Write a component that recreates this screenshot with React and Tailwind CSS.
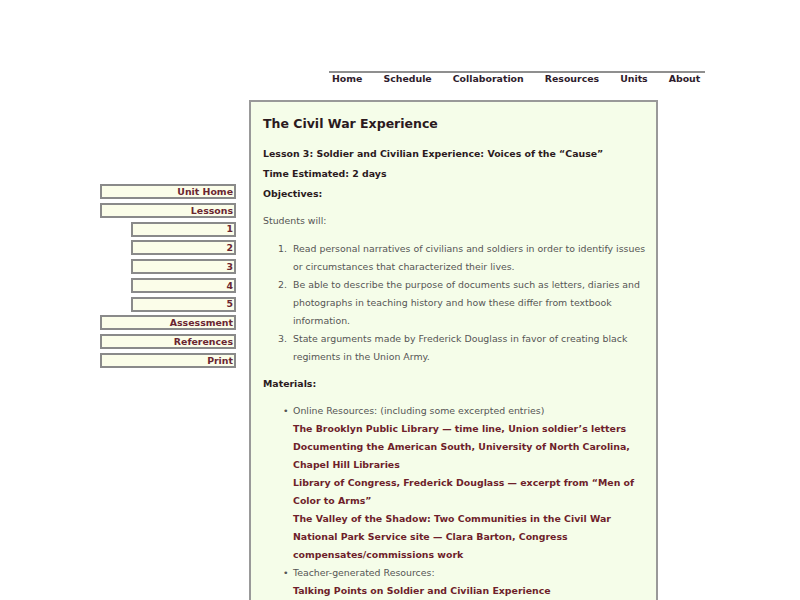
import React from "react";

const font = { fontFamily: '"DejaVu Sans", Verdana, sans-serif' };

function SideBtn({ label, indent }) {
  return (
    <div
      className={`h-[15px] border-2 border-[#8a8a8a] bg-[#fbfde9] flex items-center justify-end pr-[1px] text-[9.4px] font-bold text-[#6b2631] leading-none ${indent ? "ml-[31px]" : ""}`}
    >
      {label}
    </div>
  );
}

function Link({ children }) {
  return <div className="font-bold text-[#6e1f2b] leading-[18px]">{children}</div>;
}

export default function App() {
  const nav = ["Home", "Schedule", "Collaboration", "Resources", "Units", "About"];
  return (
    <div className="w-[800px] h-[600px] overflow-hidden bg-white" style={font}>
      <div className="ml-[329px] w-[376px] mt-[71px] border-t-2 border-[#8f8f8f] flex gap-[21px] pl-[3px] h-[29px] text-[9.4px] font-bold text-[#2e1c2c] leading-[12px]">
        {nav.map((n) => (
          <span key={n}>{n}</span>
        ))}
      </div>
      <div className="flex">
        <div className="ml-[100px] w-[136px] mt-[84px] flex flex-col gap-[3.75px]">
          <SideBtn label="Unit Home" />
          <SideBtn label="Lessons" />
          <SideBtn label="1" indent />
          <SideBtn label="2" indent />
          <SideBtn label="3" indent />
          <SideBtn label="4" indent />
          <SideBtn label="5" indent />
          <SideBtn label="Assessment" />
          <SideBtn label="References" />
          <SideBtn label="Print" />
        </div>
        <div className="ml-[13px] w-[409px] h-[600px] border-2 border-[#999999] bg-[#f5fde9] pl-[12px] pr-[8px] pt-[12px] text-[9.4px] text-[#555555]">
          <div className="text-[12.5px] font-bold text-[#2b1a1e] leading-[20px]">The Civil War Experience</div>
          <div className="mt-[10px] font-bold text-[#2b1a1e] leading-[20px]">
            Lesson 3: Soldier and Civilian Experience: Voices of the “Cause”
          </div>
          <div className="font-bold text-[#2b1a1e] leading-[20px]">Time Estimated: 2 days</div>
          <div className="font-bold text-[#2b1a1e] leading-[20px]">Objectives:</div>
          <div className="mt-[8px] leading-[18px]">Students will:</div>
          <div className="mt-[10px] leading-[18px]">
            {[
              "Read personal narratives of civilians and soldiers in order to identify issues or circumstances that characterized their lives.",
              "Be able to describe the purpose of documents such as letters, diaries and photographs in teaching history and how these differ from textbook information.",
              "State arguments made by Frederick Douglass in favor of creating black regiments in the Union Army.",
            ].map((t, i) => (
              <div key={i} className="flex pl-[15px]">
                <span className="w-[15px] shrink-0">{i + 1}.</span>
                <span>{t}</span>
              </div>
            ))}
          </div>
          <div className="mt-[8px] font-bold text-[#2b1a1e] leading-[20px]">Materials:</div>
          <div className="mt-[8px] leading-[18px]">
            <div className="flex pl-[15px]">
              <span className="w-[15px] shrink-0 pl-[5px]">•</span>
              <div>
                <div>Online Resources: (including some excerpted entries)</div>
                <Link>The Brooklyn Public Library — time line, Union soldier’s letters</Link>
                <Link>Documenting the American South, University of North Carolina, Chapel Hill Libraries</Link>
                <Link>Library of Congress, Frederick Douglass — excerpt from “Men of Color to Arms”</Link>
                <Link>The Valley of the Shadow: Two Communities in the Civil War</Link>
                <Link>National Park Service site — Clara Barton, Congress compensates/commissions work</Link>
              </div>
            </div>
            <div className="flex pl-[15px]">
              <span className="w-[15px] shrink-0 pl-[5px]">•</span>
              <div>
                <div>Teacher-generated Resources:</div>
                <Link>Talking Points on Soldier and Civilian Experience</Link>
              </div>
            </div>
          </div>
        </div>
      </div>
    </div>
  );
}
